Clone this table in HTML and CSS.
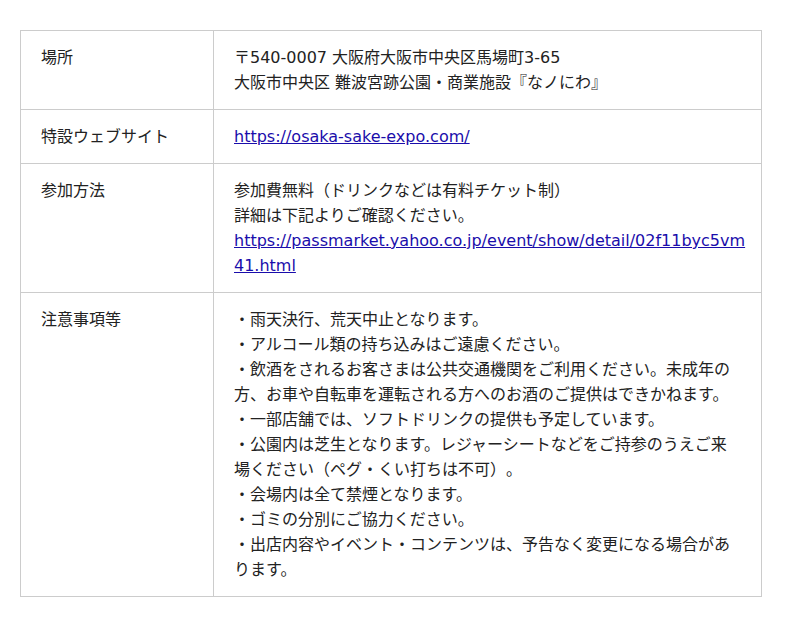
FILE: index.html
```html
<!DOCTYPE html>
<html lang="ja">
<head>
<meta charset="utf-8">
<title>開催概要</title>
<link rel="stylesheet" href="styles.css">
</head>
<body>
<div class="info">
  <div class="label">場所</div>
  <div class="value">〒540-0007 大阪府大阪市中央区馬場町3-65<br>大阪市中央区 難波宮跡公園・商業施設『なノにわ』</div>

  <div class="label">特設ウェブサイト</div>
  <div class="value"><a href="#">https://osaka-sake-expo.com/</a></div>

  <div class="label">参加方法</div>
  <div class="value value-link">参加費無料（ドリンクなどは有料チケット制）<br>詳細は下記よりご確認ください。<br><a href="#" class="url">https://passmarket.yahoo.co.jp/event/show/detail/02f11byc5vm41.html</a></div>

  <div class="label">注意事項等</div>
  <div class="value">・雨天決行、荒天中止となります。<br>・アルコール類の持ち込みはご遠慮ください。<br>・飲酒をされるお客さまは公共交通機関をご利用ください。未成年の方、お車や自転車を運転される方へのお酒のご提供はできかねます。<br>・一部店舗では、ソフトドリンクの提供も予定しています。<br>・公園内は芝生となります。レジャーシートなどをご持参のうえご来場ください（ペグ・くい打ちは不可）。<br>・会場内は全て禁煙となります。<br>・ゴミの分別にご協力ください。<br>・出店内容やイベント・コンテンツは、予告なく変更になる場合があります。</div>
</div>
</body>
</html>
```

FILE: styles.css
```css
html, body {
  margin: 0;
  padding: 0;
  background: #fff;
}

body {
  padding: 30px 20px;
  font-family: "DejaVu Sans", "Noto Sans CJK JP", sans-serif;
  font-size: 16px;
  line-height: 25px;
  color: #222;
  text-spacing-trim: space-all;
}

.info {
  display: grid;
  grid-template-columns: 193px 548px;
  width: 742px;
  border-top: 1px solid #ccc;
  border-left: 1px solid #ccc;
  box-sizing: border-box;
}

.label,
.value {
  padding: 14px 20px;
  border-right: 1px solid #ccc;
  border-bottom: 1px solid #ccc;
}

.value-link {
  padding-right: 14px;
}

.value a {
  color: #1a0dab;
  text-decoration: underline;
}

.value .url {
  word-break: break-all;
}
```
